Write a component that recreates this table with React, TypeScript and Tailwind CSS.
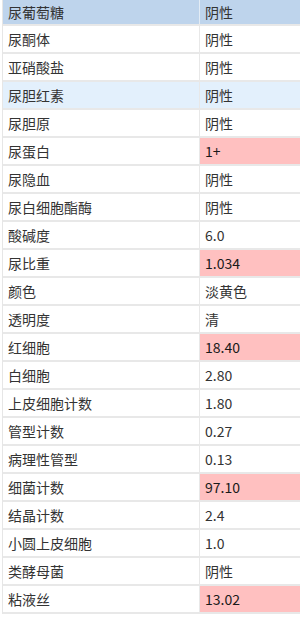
const rows: { name: string; value: string; flag?: boolean }[] = [
  { name: '尿酮体', value: '阴性' },
  { name: '亚硝酸盐', value: '阴性' },
  { name: '尿胆红素', value: '阴性' },
  { name: '尿胆原', value: '阴性' },
  { name: '尿蛋白', value: '1+', flag: true },
  { name: '尿隐血', value: '阴性' },
  { name: '尿白细胞酯酶', value: '阴性' },
  { name: '酸碱度', value: '6.0' },
  { name: '尿比重', value: '1.034', flag: true },
  { name: '颜色', value: '淡黄色' },
  { name: '透明度', value: '清' },
  { name: '红细胞', value: '18.40', flag: true },
  { name: '白细胞', value: '2.80' },
  { name: '上皮细胞计数', value: '1.80' },
  { name: '管型计数', value: '0.27' },
  { name: '病理性管型', value: '0.13' },
  { name: '细菌计数', value: '97.10', flag: true },
  { name: '结晶计数', value: '2.4' },
  { name: '小圆上皮细胞', value: '1.0' },
  { name: '类酵母菌', value: '阴性' },
  { name: '粘液丝', value: '13.02', flag: true },
]

export default function App() {
  return (
    <div className="h-[639px] w-[300px] overflow-hidden bg-white pl-[2px] font-['Noto_Sans_CJK_SC',sans-serif] text-[14px] text-[#333]">
      <div className="border-l border-[#e6e6e6]">
        {/* header row, scrolled so only its lower part shows */}
        <div className="flex h-[26px] border-b-2 border-[#e8e8e8] bg-[#bed4ec]">
          <div className="w-[197px] border-r border-[#e3ecf5] pl-[5px] leading-[24px]">尿葡萄糖</div>
          <div className="flex-1 pl-[5px] leading-[24px]">阴性</div>
        </div>

        {rows.map((r, i) => (
          <div
            key={r.name}
            className={
              'flex h-[28px] border-b-2 border-[#e8e8e8] ' +
              (i === 2 ? 'bg-[#e3f0fc]' : 'bg-white')
            }
          >
            <div className="w-[197px] border-r border-[#e8e8e8] pl-[5px] leading-[26px]">{r.name}</div>
            <div
              className={
                'flex-1 pl-[5px] leading-[26px] ' + (r.flag ? 'bg-[#ffc0c0] text-[#1a1a1a]' : '')
              }
            >
              {r.value}
            </div>
          </div>
        ))}
      </div>
    </div>
  )
}
